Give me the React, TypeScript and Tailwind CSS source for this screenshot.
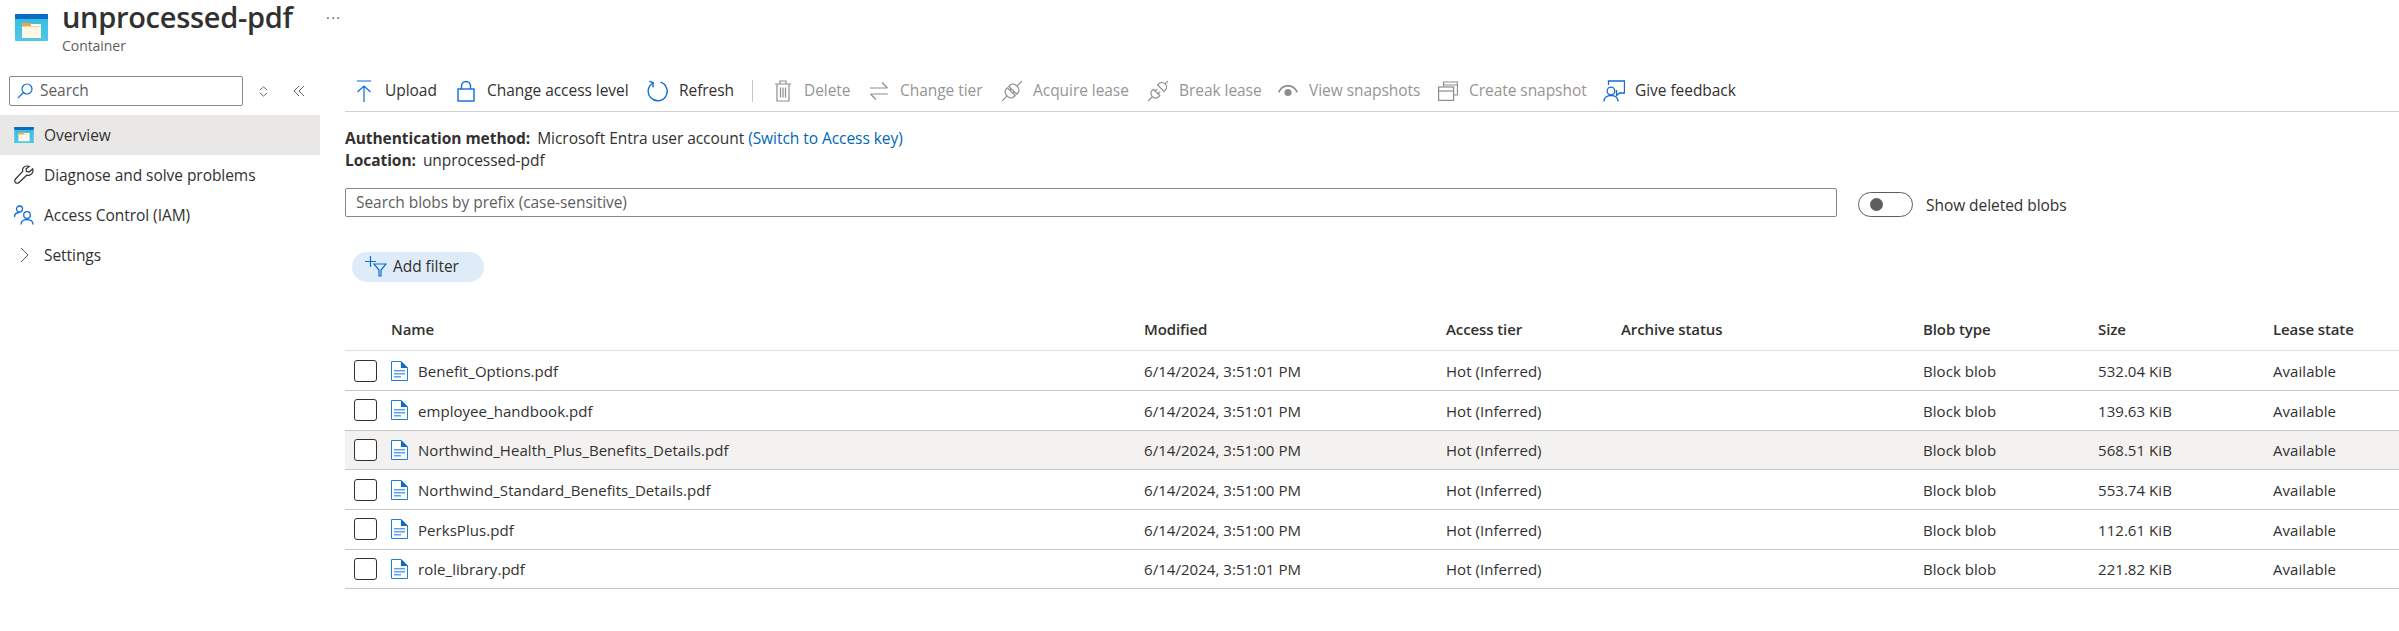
import React from "react";

const blue = "#0f6cd4";

function ContainerIcon({ className }: { className: string }) {
  return (
    <svg viewBox="0 0 33 27" className={className}>
      <defs>
        <linearGradient id="cg" x1="0" y1="0" x2="0" y2="1">
          <stop offset="0" stopColor="#32bedd" />
          <stop offset="1" stopColor="#50c7e8" />
        </linearGradient>
      </defs>
      <rect x="0" y="0" width="33" height="27" rx="1" fill="url(#cg)" />
      <rect x="0" y="0" width="33" height="5" rx="1" fill="#0a6cc2" />
      <rect x="7" y="10" width="19" height="14" fill="#fdf8e6" />
      <rect x="7" y="9" width="9" height="4" fill="#f5a04a" />
      <rect x="7" y="12" width="19" height="1" fill="#e8d8b0" />
    </svg>
  );
}

function DocIcon() {
  return (
    <svg viewBox="0 0 17 20" className="w-[17px] h-[20px] shrink-0">
      <path d="M.5.5H10L16.5 7v12.5H.5z" fill="#fff" stroke="#1a7fe0" />
      <path d="M10 0l7 7h-7z" fill="#0f6cc8" />
      <path d="M3 9h11v1.6H3zM3 12h11v1.6H3zM3 15h7v1.6H3z" fill="#5ea0ef" />
    </svg>
  );
}

const ic = { fill: "none", strokeWidth: 1.2 };

const UploadIcon = () => (
  <svg viewBox="0 0 20 24" className="w-[20px] h-[24px]" {...ic} stroke={blue}>
    <path d="M3 2h14M10 23V7M3.5 13L10 7l6.5 6" />
  </svg>
);
const LockIcon = () => (
  <svg viewBox="0 0 18 22" className="w-[18px] h-[22px]" {...ic} stroke={blue} strokeWidth={1.4}>
    <rect x="1" y="9" width="16" height="12" />
    <path d="M4.5 9V6a4.5 4.5 0 0 1 9 0v3" />
  </svg>
);
const RefreshIcon = () => (
  <svg viewBox="0 0 22 22" className="w-[22px] h-[22px]" {...ic} stroke={blue} strokeWidth={1.4}>
    <path d="M13.5 2.2A9.5 9.5 0 1 1 6 3" />
    <path d="M2.5 1.2L6.3 3l-.4 4.4" />
  </svg>
);
const grey = "#8f8d8b";
const TrashIcon = () => (
  <svg viewBox="0 0 16 22" className="w-[16px] h-[22px]" {...ic} stroke={grey}>
    <path d="M0 4h16M5 4V1h6v3M2 4v17h12V4M5.5 7.5v10M8 7.5v10M10.5 7.5v10" />
  </svg>
);
const SwapIcon = () => (
  <svg viewBox="0 0 20 22" className="w-[20px] h-[22px]" {...ic} stroke={grey}>
    <path d="M1 8h17M13 2.5L18.5 8M19 14H2M7 19.5L1.5 14" />
  </svg>
);
const AcquireIcon = () => (
  <svg viewBox="0 0 22 22" className="w-[22px] h-[22px]" {...ic} stroke={grey}>
    <g transform="rotate(-45 11 11)">
      <path d="M-3 11H4M18 11h7" />
      <path d="M10 5.5H8a4 5.500 0 0 0-4 5.500 4 5.500 0 0 0 4 5.500h2zM12 5.500h2a4 5.500 0 0 1 4 5.500 4 5.500 0 0 1-4 5.500h-2z" />
      <path d="M10 9h2M10 13h2" />
    </g>
  </svg>
);
const BreakIcon = () => (
  <svg viewBox="0 0 22 22" className="w-[22px] h-[22px]" {...ic} stroke={grey}>
    <g transform="rotate(-45 11 11)">
      <path d="M-3 11H3M21 11h4" />
      <path d="M9 6.500H7a4 4.500 0 0 0-4 4.500 4 4.500 0 0 0 4 4.500h2zM9 9h3M9 13h3" />
      <path d="M15 6.500h2a4 4.500 0 0 1 4 4.500 4 4.500 0 0 1-4 4.500h-2z" />
    </g>
  </svg>
);
const EyeIcon = () => (
  <svg viewBox="0 0 20 12" className="w-[20px] h-[12px]" fill={grey}>
    <path d="M10 0C5.500 0 2 2.500 0 7l1.500.7C3.200 3.800 6.200 1.800 10 1.800s6.800 2 8.500 5.900L20 7C18 2.500 14.500 0 10 0z" />
    <circle cx="10" cy="7.500" r="3.500" />
  </svg>
);
const SnapIcon = () => (
  <svg viewBox="0 0 20 20" className="w-[20px] h-[20px]" {...ic} stroke={grey}>
    <path d="M5.500 5.500V1h14v13h-4M5.500 4h14" />
    <rect x=".6" y="6" width="15" height="13.400" />
    <path d="M.6 10h15" />
  </svg>
);
const FeedbackIcon = () => (
  <svg viewBox="0 0 22 22" className="w-[22px] h-[22px]" {...ic} stroke={blue} strokeWidth={1.3}>
    <path d="M5.500 5V1h16v12h-5l-3 2.500V10" />
    <circle cx="8" cy="11" r="3.800" />
    <path d="M1 21.500c0-3.800 3-6 7-6s7 2.200 7 6" />
  </svg>
);

const tools: { label: string; icon: React.ReactNode; w: string; on?: boolean }[] = [
  { label: "Upload", icon: <UploadIcon />, w: "w-[102px]", on: true },
  { label: "Change access level", icon: <LockIcon />, w: "w-[192px]", on: true },
  { label: "Refresh", icon: <RefreshIcon />, w: "w-[105px]", on: true },
];
const tools2: { label: string; icon: React.ReactNode; w: string; on?: boolean }[] = [
  { label: "Delete", icon: <TrashIcon />, w: "w-[96px]" },
  { label: "Change tier", icon: <SwapIcon />, w: "w-[133px]" },
  { label: "Acquire lease", icon: <AcquireIcon />, w: "w-[146px]" },
  { label: "Break lease", icon: <BreakIcon />, w: "w-[130px]" },
  { label: "View snapshots", icon: <EyeIcon />, w: "w-[160px]" },
  { label: "Create snapshot", icon: <SnapIcon />, w: "w-[166px]" },
  { label: "Give feedback", icon: <FeedbackIcon />, w: "w-[140px]", on: true },
];

function Tool({ t }: { t: (typeof tools)[number] }) {
  return (
    <div className={`flex items-center gap-[10px] shrink-0 ${t.w} ${t.on ? "text-[#323130]" : "text-[#979593]"}`}>
      <span className="w-[22px] flex justify-center shrink-0">{t.icon}</span>
      <span className="whitespace-nowrap">{t.label}</span>
    </div>
  );
}

const rows = [
  ["Benefit_Options.pdf", "6/14/2024, 3:51:01 PM", "532.04 KiB"],
  ["employee_handbook.pdf", "6/14/2024, 3:51:01 PM", "139.63 KiB"],
  ["Northwind_Health_Plus_Benefits_Details.pdf", "6/14/2024, 3:51:00 PM", "568.51 KiB"],
  ["Northwind_Standard_Benefits_Details.pdf", "6/14/2024, 3:51:00 PM", "553.74 KiB"],
  ["PerksPlus.pdf", "6/14/2024, 3:51:00 PM", "112.61 KiB"],
  ["role_library.pdf", "6/14/2024, 3:51:01 PM", "221.82 KiB"],
];

const cols = "grid grid-cols-[46px_753px_302px_175px_302px_175px_175px_1fr] items-center";

function NavItem({ icon, label, active }: { icon: React.ReactNode; label: string; active?: boolean }) {
  return (
    <div className={`flex items-center h-[40px] ${active ? "bg-[#e9e8e6] font-medium" : ""}`}>
      <span className="w-[44px] pl-[14px] shrink-0 flex items-center">{icon}</span>
      <span className="pt-[2px]">{label}</span>
    </div>
  );
}

export default function App() {
  return (
    <div className="w-[2399px] h-[631px] overflow-hidden bg-white text-[#323130] text-[15.5px] font-['Open_Sans',sans-serif] tracking-[-0.05px]">
      <header className="flex h-[70px]">
        <div className="pl-[15px] pt-[14px] w-[62px] shrink-0">
          <ContainerIcon className="w-[33px] h-[27px]" />
        </div>
        <div className="w-[264px] shrink-0">
          <div className="text-[29px] leading-[34px] font-semibold tracking-[-0.3px] whitespace-nowrap">unprocessed-pdf</div>
          <div className="text-[14px] leading-[20px] mt-[2px] text-[#605e5c]">Container</div>
        </div>
        <div className="text-[#605e5c] text-[14px] leading-[20px] pt-[8px] tracking-[1.5px]">···</div>
      </header>
      <div className="flex">
        <aside className="w-[320px] shrink-0">
          <div className="flex items-center h-[45px] pt-[6px] pb-[9px]">
            <div className="ml-[9px] w-[234px] h-[30px] border border-[#8a8886] rounded-[2px] flex items-center pl-[7px] gap-[7px] text-[#605e5c]">
              <svg viewBox="0 0 16 16" className="w-[16px] h-[16px]" fill="none" stroke={blue} strokeWidth="1.2">
                <circle cx="10" cy="6" r="5" />
                <path d="M6.5 9.5L.8 15.2" />
              </svg>
              Search
            </div>
            <svg viewBox="0 0 12 12" className="w-[11px] h-[11px] ml-[15px]" fill="none" stroke="#605e5c">
              <path d="M2 4.500L6 1l4 3.500M2 7.500L6 11l4-3.500" />
            </svg>
            <svg viewBox="0 0 12 12" className="w-[12px] h-[12px] ml-[24px]" fill="none" stroke="#605e5c">
              <path d="M6 1L1 6l5 5M11 1L6 6l5 5" />
            </svg>
          </div>
          <NavItem active icon={<ContainerIcon className="w-[20px] h-[16px]" />} label="Overview" />
          <NavItem
            label="Diagnose and solve problems"
            icon={
              <svg viewBox="0 0 20 20" className="w-[20px] h-[20px]" fill="none" stroke="#323130" strokeWidth="1.2">
                <path d="M13 1c-3 0-5 2.500-4.300 5.300L1.500 14c-1 1.200-1 2.500 0 3.500s2.500 1 3.500 0l7.700-7.300C15.500 11 19 9 19 5.500c0-.7-.1-1.200-.3-1.700L15 7l-2.600-.6L12 4l3.300-2.700C14.500 1 13.800 1 13 1z" />
              </svg>
            }
          />
          <NavItem
            label="Access Control (IAM)"
            icon={
              <svg viewBox="0 0 20 20" className="w-[20px] h-[20px]" fill="none" stroke={blue} strokeWidth="1.3">
                <circle cx="5.5" cy="4" r="3" />
                <path d="M.5 12c0-3 2-4.500 5-4.500" />
                <circle cx="13" cy="10" r="3.3" />
                <path d="M7 19.5c0-3 2.500-5 6-5s6 2 6 5" />
              </svg>
            }
          />
          <NavItem
            label="Settings"
            icon={
              <svg viewBox="0 0 10 16" className="w-[10px] h-[16px] ml-[6px]" fill="none" stroke="#605e5c" strokeWidth="1">
                <path d="M1 1l7 7-7 7" />
              </svg>
            }
          />
        </aside>
        <main className="flex-1 ml-[25px]">
          <div className="flex items-center h-[42px] border-b border-[#d2d0ce] pl-[8px]">
            {tools.map((t) => (
              <Tool key={t.label} t={t} />
            ))}
            <div className="w-px h-[22px] bg-[#c8c6c4] mr-[19px]" />
            {tools2.map((t) => (
              <Tool key={t.label} t={t} />
            ))}
          </div>
          <div className="leading-[22px] mt-[15px]">
            <div className="whitespace-nowrap">
              <b className="font-bold mr-[7px]">Authentication method:</b>Microsoft Entra user account{" "}
              <span className="text-[#0067b8]">(Switch to Access key)</span>
            </div>
            <div className="whitespace-nowrap">
              <b className="font-bold mr-[7px]">Location:</b>unprocessed-pdf
            </div>
          </div>
          <div className="flex items-center mt-[17px]">
            <div className="w-[1492px] h-[29px] border border-[#8a8886] rounded-[2px] pl-[10px] text-[#605e5c] flex items-center">
              Search blobs by prefix (case-sensitive)
            </div>
            <div className="ml-[21px] w-[55px] h-[25px] border border-[#605e5c] rounded-full flex items-center pl-[11px] mt-[4px]">
              <div className="w-[13px] h-[13px] rounded-full bg-[#605e5c]" />
            </div>
            <div className="ml-[13px] mt-[6px]">Show deleted blobs</div>
          </div>
          <div className="ml-[7px] mt-[35px] w-[132px] h-[30px] rounded-full bg-[#deecf9] flex items-center pl-[13px] gap-[6px]">
            <svg viewBox="0 0 22 22" className="w-[22px] h-[22px] -mt-[2px]" fill="none" stroke={blue} strokeWidth="1.2">
              <path d="M0 6.5h11M5.5 1v11M9 9h12l-5 6v6h-2v-6z" />
            </svg>
            <span className="-mt-[2px]">Add filter</span>
          </div>
          <div className={`${cols} h-[39px] mt-[30px] pb-[5px] border-b border-[#e1dfdd] font-semibold text-[15px] tracking-[-0.1px]`}>
            <div />
            <div>Name</div>
            <div>Modified</div>
            <div>Access tier</div>
            <div>Archive status</div>
            <div>Blob type</div>
            <div>Size</div>
            <div>Lease state</div>
          </div>
          {rows.map((r, i) => (
            <div key={r[0]} className={`${cols} h-[39.7px] border-b border-[#c8c6c4] text-[15px] tracking-[0.05px] ${i === 2 ? "bg-[#f3f2f1]" : ""}`}>
              <div className="pl-[9px]">
                <div className="w-[23px] h-[22px] border border-[#323130] rounded-[3px] bg-white" />
              </div>
              <div className="flex items-center gap-[10px]">
                <DocIcon />
                <span className="pt-[1px]">{r[0]}</span>
              </div>
              <div className="pt-[1px]">{r[1]}</div>
              <div className="pt-[1px]">Hot (Inferred)</div>
              <div />
              <div className="pt-[1px]">Block blob</div>
              <div className="pt-[1px]">{r[2]}</div>
              <div className="pt-[1px]">Available</div>
            </div>
          ))}
        </main>
      </div>
    </div>
  );
}
